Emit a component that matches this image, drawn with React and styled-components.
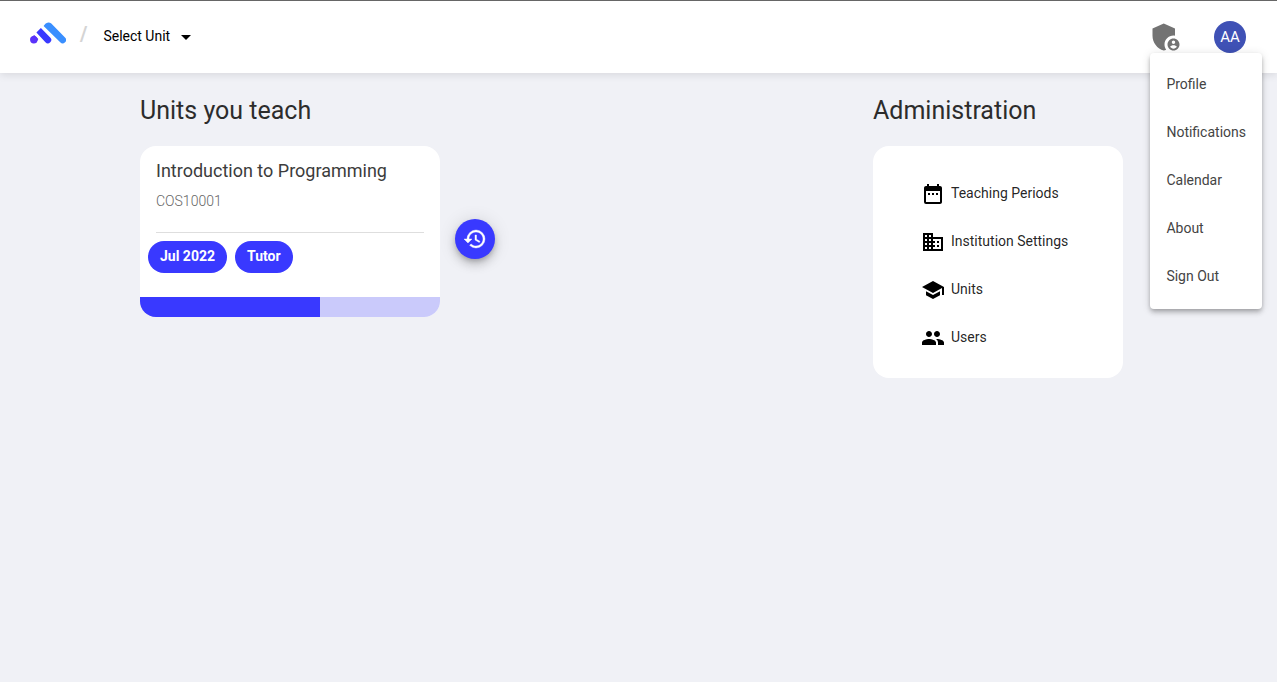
import React from 'react';
import styled, { createGlobalStyle } from 'styled-components';
import {
  MdAdminPanelSettings,
  MdArrowDropDown,
  MdDateRange,
  MdBusiness,
  MdSchool,
  MdPeople,
  MdHistory,
} from 'react-icons/md';

const GlobalStyle = createGlobalStyle`
  *, *::before, *::after { box-sizing: border-box; }
  body {
    margin: 0;
    background: #f0f1f6;
    color: rgba(0, 0, 0, 0.87);
    font-family: Roboto, "Liberation Sans", sans-serif;
    font-size: 14px;
  }
  button { font: inherit; color: inherit; border: 0; background: none; padding: 0; cursor: pointer; }
  a { color: inherit; text-decoration: none; }
`;

const Header = styled.header`
  display: flex;
  align-items: center;
  height: 73px;
  padding: 0 31px 0 30px;
  background: #fff;
  border-top: 1px solid #666;
  box-shadow: 0 2px 8px rgba(0, 0, 0, 0.1);
`;

const LogoLink = styled.a`
  display: flex;
  margin-bottom: 8px;
`;

const Slash = styled.span`
  margin: 0 16px 6px 14px;
  color: #d4d4d4;
  font-size: 20px;
  font-weight: 700;
  line-height: 24px;
`;

const Label = styled.span`
  padding-bottom: 2px;
  line-height: 22px;
`;

const UnitButton = styled.button`
  display: flex;
  align-items: center;
  gap: 4px;
  color: #000;
`;

const HeaderEnd = styled.div`
  display: flex;
  align-items: center;
  gap: 30px;
  margin-left: auto;
`;

const AdminButton = styled.button`
  display: flex;
  color: #737373;
`;

const Account = styled.div`
  position: relative;
`;

const Avatar = styled.button`
  display: block;
  width: 32px;
  height: 32px;
  border-radius: 50%;
  background: #3f51b5;
  color: #fff;
  font-size: 15px;
  line-height: 32px;
`;

const Menu = styled.nav`
  position: absolute;
  top: 100%;
  right: -16px;
  z-index: 2;
  padding: 8px 0;
  border-radius: 4px;
  background: #fff;
  box-shadow: 0 2px 4px -1px rgba(0, 0, 0, 0.2), 0 4px 5px rgba(0, 0, 0, 0.14),
    0 1px 10px rgba(0, 0, 0, 0.12);
`;

const MenuItem = styled.a`
  display: block;
  padding: 0 16px 2px;
  color: #444;
  line-height: 46px;
  white-space: nowrap;
`;

const Main = styled.main`
  display: flex;
  justify-content: space-between;
  gap: 32px;
  padding: 20px 154px 32px 140px;
`;

const Title = styled.h1`
  margin: 0 0 18px;
  font-size: 25px;
  font-weight: 400;
  line-height: 35px;
  color: #2c2c2c;
`;

const UnitRow = styled.div`
  display: flex;
  align-items: center;
  gap: 15px;
`;

const UnitCard = styled.article`
  width: 300px;
  overflow: hidden;
  border-radius: 16px;
  background: #fff;
`;

const UnitHead = styled.div`
  margin: 0 16px;
  padding: 13px 0 19px;
  border-bottom: 1px solid #dedede;
`;

const UnitName = styled.h2`
  margin: 0 0 6px;
  color: #3c3c3c;
  font-size: 18px;
  font-weight: 400;
  line-height: 24px;
`;

const UnitCode = styled.p`
  margin: 0;
  font-weight: 300;
  line-height: 24px;
  color: #666;
`;

const Chips = styled.div`
  display: flex;
  gap: 8px;
  padding: 8px 8px 24px;
`;

const Chip = styled.span`
  padding: 0 12px 2px;
  border-radius: 16px;
  background: #3939ff;
  color: #fff;
  font-weight: 700;
  line-height: 30px;
`;

const Progress = styled.div`
  height: 20px;
  background: #cacafb;
`;

const ProgressFill = styled.div`
  height: 100%;
  background: #3939ff;
`;

const HistoryButton = styled.button`
  display: flex;
  align-items: center;
  justify-content: center;
  width: 40px;
  height: 40px;
  margin-top: 15px;
  border-radius: 50%;
  background: #3939ff;
  color: #fff;
  box-shadow: 0 3px 5px -1px rgba(0, 0, 0, 0.2), 0 6px 10px rgba(0, 0, 0, 0.14),
    0 1px 18px rgba(0, 0, 0, 0.12);

  svg { stroke-width: 0.4; }
  path[fill="none"] { stroke: none; }
`;

const AdminCard = styled.nav`
  width: 250px;
  padding: 24px 0 16px 48px;
  border-radius: 16px;
  background: #fff;
`;

const AdminLink = styled.a`
  display: flex;
  align-items: center;
  gap: 6px;
  height: 48px;

  svg { color: #000; }
`;

const adminLinks = [
  { label: 'Teaching Periods', Icon: MdDateRange },
  { label: 'Institution Settings', Icon: MdBusiness },
  { label: 'Units', Icon: MdSchool },
  { label: 'Users', Icon: MdPeople },
];

const accountLinks = ['Profile', 'Notifications', 'Calendar', 'About', 'Sign Out'];

function Logo() {
  return (
    <svg width="36" height="22" viewBox="0 0 36 22" aria-hidden="true">
      <path d="M4.200 13 8.300 17.100 6.600 20.200A3.800 3.800 0 0 1 1.100 15.400Z" fill="#5a32fa" />
      <circle cx="3.800" cy="17.800" r="3.700" fill="#5a32fa" />
      <path d="M6.400 10.400 10.900 6 20.200 15.400A3.400 3.400 0 0 1 15.400 20.300Z" fill="#3939ff" />
      <path d="M13.600 4 15.400 1.800A4 4 0 0 1 21.300 1.600L35 15.400A3.400 3.400 0 0 1 30.200 20.300Z" fill="#3a8fff" />
    </svg>
  );
}

export default function App() {
  return (
    <>
      <GlobalStyle />
      <Header>
        <LogoLink href="#home" aria-label="Home"><Logo /></LogoLink>
        <Slash aria-hidden="true">/</Slash>
        <UnitButton type="button">
          <Label>Select Unit</Label>
          <MdArrowDropDown size={24} />
        </UnitButton>
        <HeaderEnd>
          <AdminButton type="button" aria-label="Administration">
            <MdAdminPanelSettings size={36} />
          </AdminButton>
          <Account>
            <Avatar type="button" aria-expanded="true">AA</Avatar>
            <Menu aria-label="Account">
              {accountLinks.map((label) => (
                <MenuItem key={label} href="#account">{label}</MenuItem>
              ))}
            </Menu>
          </Account>
        </HeaderEnd>
      </Header>
      <Main>
        <section>
          <Title>Units you teach</Title>
          <UnitRow>
            <UnitCard>
              <UnitHead>
                <UnitName>Introduction to Programming</UnitName>
                <UnitCode>COS10001</UnitCode>
              </UnitHead>
              <Chips>
                <Chip>Jul 2022</Chip>
                <Chip>Tutor</Chip>
              </Chips>
              <Progress role="progressbar" aria-label="Teaching period progress" aria-valuenow={60}>
                <ProgressFill style={{ width: '60%' }} />
              </Progress>
            </UnitCard>
            <HistoryButton type="button" aria-label="Past units">
              <MdHistory size={24} />
            </HistoryButton>
          </UnitRow>
        </section>
        <section>
          <Title>Administration</Title>
          <AdminCard aria-label="Administration">
            {adminLinks.map(({ label, Icon }) => (
              <AdminLink key={label} href="#admin">
                <Icon size={24} />
                <Label>{label}</Label>
              </AdminLink>
            ))}
          </AdminCard>
        </section>
      </Main>
    </>
  );
}
